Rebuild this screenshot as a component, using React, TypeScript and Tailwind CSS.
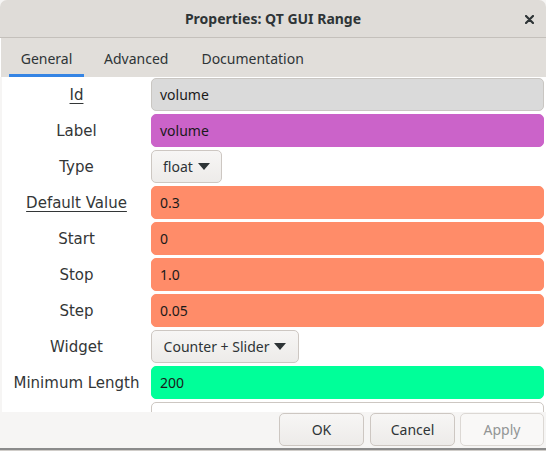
import React from "react";

const rows: { label: string; underline?: boolean; kind: "field" | "drop"; value: string; bg?: string; w?: string }[] = [
  { label: "Id", underline: true, kind: "field", value: "volume", bg: "bg-[#dadada] border-[#c9c6c2]" },
  { label: "Label", kind: "field", value: "volume", bg: "bg-[#cb63c9] border-[#cb63c9]" },
  { label: "Type", kind: "drop", value: "float", w: "w-[71px]" },
  { label: "Default Value", underline: true, kind: "field", value: "0.3", bg: "bg-[#ff8c69] border-[#ff8c69]" },
  { label: "Start", kind: "field", value: "0", bg: "bg-[#ff8c69] border-[#ff8c69]" },
  { label: "Stop", kind: "field", value: "1.0", bg: "bg-[#ff8c69] border-[#ff8c69]" },
  { label: "Step", kind: "field", value: "0.05", bg: "bg-[#ff8c69] border-[#ff8c69]" },
  { label: "Widget", kind: "drop", value: "Counter + Slider", w: "w-[148px]" },
  { label: "Minimum Length", kind: "field", value: "200", bg: "bg-[#00ff99] border-[#00ff99]" },
];

function Caret() {
  return (
    <svg width="12" height="7" viewBox="0 0 12 7" className="ml-[5px]">
      <path d="M0 0 L12 0 L6 7 Z" fill="#2e3436" />
    </svg>
  );
}

const btn =
  "h-[33px] flex items-center justify-center rounded-[5px] border border-[#cdc7c2] bg-gradient-to-b from-[#f7f6f5] to-[#edebe9] text-[14px] text-[#2e3436]";

export default function App() {
  return (
    <div
      className="w-[546px] h-[451px] flex flex-col overflow-hidden bg-[#f6f5f4] text-[#2e3436]"
      style={{ fontFamily: "'Noto Sans', 'Open Sans', sans-serif" }}
    >
      <div className="h-[38px] shrink-0 relative flex items-center justify-center bg-[#dfdcd8] border-b border-[#c4c0bb] rounded-t-[7px]">
        <span className="text-[14px] font-bold text-[#2e3436]">Properties: QT GUI Range</span>
        <svg width="9" height="9" viewBox="0 0 9 9" className="absolute left-[525px] top-[15px]">
          <path d="M1 1 L8 8 M8 1 L1 8" stroke="#2e3436" strokeWidth="2.2" strokeLinecap="round" />
        </svg>
      </div>
      <div className="h-[39px] shrink-0 flex bg-[#e1deda] border-l border-white pl-[8px] text-[14px] text-[#2e3436]">
        <div className="w-[75px] h-[39px] flex items-center justify-center pt-[5px] border-b-[3px] border-[#3584e4]">
          General
        </div>
        <div className="h-[39px] flex items-center pt-[5px] ml-[20px] border-b-[3px] border-transparent">Advanced</div>
        <div className="h-[39px] flex items-center pt-[5px] ml-[33px] border-b-[3px] border-transparent">Documentation</div>
      </div>
      <div className="flex-1 overflow-hidden bg-white border-l-2 border-[#f6f5f4] pt-[1px] pr-[2px]">
        <div className="flex flex-col gap-[3px]">
          {rows.map((r) => (
            <div key={r.label} className="flex h-[33px] items-center">
              <div
                className="w-[149px] shrink-0 text-center text-[15px] text-[#333637] pt-[2px]"
                style={{ fontFamily: "'DejaVu Sans', sans-serif" }}
              >
                <span className={r.underline ? "underline underline-offset-[3px]" : ""}>{r.label}</span>
              </div>
              {r.kind === "field" ? (
                <div className={`flex-1 h-[33px] flex items-center pl-[8px] rounded-[5px] border text-[14px] text-[#1a1a1a] ${r.bg}`}>
                  {r.value}
                </div>
              ) : (
                <div className={`${r.w} ${btn}`}>
                  {r.value}
                  <Caret />
                </div>
              )}
            </div>
          ))}
          <div className="flex h-[33px]">
            <div className="w-[149px] shrink-0" />
            <div className="flex-1 h-[33px] rounded-[5px] border border-[#cdc7c2] bg-white" />
          </div>
        </div>
      </div>
      <div className="h-[36px] shrink-0 flex items-start justify-end pr-[2px] pt-[1px] bg-[#f6f5f4]">
        <div className={`w-[85px] ${btn}`}>OK</div>
        <div className={`w-[85px] ml-[6px] ${btn}`}>Cancel</div>
        <div className="w-[84px] ml-[5px] h-[33px] flex items-center justify-center rounded-[5px] border border-[#dcd8d4] bg-[#f9f8f7] text-[14px] text-[#929595]">
          Apply
        </div>
      </div>
      <div className="h-[2px] shrink-0 bg-[#8b8b8b]" />
      <div className="h-[1px] shrink-0 bg-[#d0cdc9]" />
    </div>
  );
}
